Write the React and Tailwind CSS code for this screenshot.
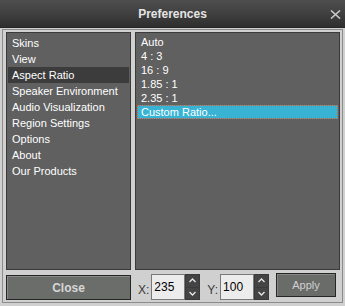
import { useState } from "react";

const pages = [
  "Skins",
  "View",
  "Aspect Ratio",
  "Speaker Environment",
  "Audio Visualization",
  "Region Settings",
  "Options",
  "About",
  "Our Products",
];

const ratios = ["Auto", "4 : 3", "16 : 9", "1.85 : 1", "2.35 : 1", "Custom Ratio..."];

function Spinner() {
  return (
    <div className="w-[15px] h-[26px] bg-[#3a3a3a] flex flex-col gap-[1px] p-[1px]">
      <div className="flex-1 bg-[#444] flex items-center justify-center">
        <svg width="7" height="5" viewBox="0 0 7 5">
          <path d="M0.5 4 L3.5 1 L6.5 4" stroke="#e8e8e8" strokeWidth="1.3" fill="none" />
        </svg>
      </div>
      <div className="flex-1 bg-[#444] flex items-center justify-center">
        <svg width="7" height="5" viewBox="0 0 7 5">
          <path d="M0.5 1 L3.5 4 L6.5 1" stroke="#e8e8e8" strokeWidth="1.3" fill="none" />
        </svg>
      </div>
    </div>
  );
}

export default function App() {
  const [page, setPage] = useState("Aspect Ratio");
  const [ratio, setRatio] = useState("Custom Ratio...");
  const [x, setX] = useState("235");
  const [y, setY] = useState("100");

  return (
    <div className="w-[345px] h-[306px] bg-[#d0d0d0] flex flex-col font-['Liberation_Sans',Arial,sans-serif] overflow-hidden">
      {/* title bar */}
      <div className="relative h-[28px] shrink-0 bg-gradient-to-b from-[#4e4e4e] via-[#404040] to-[#2e2e2e] border-b border-[#262626] flex items-center justify-center">
        <span className="text-[12px] font-bold text-[#e4e4e4]">Preferences</span>
        <svg className="absolute right-[4px] top-[10px]" width="11" height="9" viewBox="0 0 11 9">
          <path d="M1 0.5 L10 8.5 M10 0.5 L1 8.5" stroke="#c8c8c8" strokeWidth="1.6" />
        </svg>
      </div>

      <div className="flex-1 mt-[1px] mx-[2px] mb-[3px] border border-[#8c8c8c] flex flex-col pl-[3px] pr-[2px] pt-[2px] pb-[2px]">
        <div className="flex gap-[4px] h-[238px]">
          <div className="w-[125px] bg-[#606060] border border-[#3a3a3a] pt-[2px] pl-[1px] pr-[1px]">
            {pages.map((p) => (
              <div
                key={p}
                onClick={() => setPage(p)}
                className={`h-[16px] pl-[4px] flex items-center text-[11px] text-white whitespace-nowrap ${
                  page === p ? "bg-[#3c3c3c]" : ""
                }`}
              >
                {p}
              </div>
            ))}
          </div>

          <div className="flex-1 bg-[#606060] border border-[#3a3a3a] pt-[2px] px-[1px]">
            {ratios.map((r) => (
              <div
                key={r}
                onClick={() => setRatio(r)}
                className={`h-[14px] pl-[3px] flex items-center text-[11px] text-white whitespace-nowrap border ${
                  ratio === r ? "bg-[#38b3d3] border-dotted border-[#e0562a]" : "border-transparent"
                }`}
              >
                {r}
              </div>
            ))}
          </div>
        </div>

        <div className="flex items-start mt-[3px]">
          <button className="w-[125px] h-[25px] mt-[2px] bg-[#6b6d6b] border border-[#262626] shadow-[inset_1px_1px_0_#8a8a8a] text-[12px] font-bold text-[#d6d6d6]">
            Close
          </button>

          <span className="ml-[7px] mt-[8px] text-[12px] text-[#3a3a3a]">X:</span>
          <input
            value={x}
            onChange={(e) => setX(e.target.value)}
            className="ml-[2px] mt-[1px] w-[34px] h-[26px] bg-[#ececec] border border-[#7a7a7a] pl-[2px] text-[12px] text-black outline-none"
          />
          <div className="mt-[1px]">
            <Spinner />
          </div>

          <span className="ml-[7px] mt-[8px] text-[12px] text-[#3a3a3a]">Y:</span>
          <input
            value={y}
            onChange={(e) => setY(e.target.value)}
            className="ml-[2px] mt-[1px] w-[34px] h-[26px] bg-[#ececec] border border-[#7a7a7a] pl-[2px] text-[12px] text-black outline-none"
          />
          <div className="mt-[1px]">
            <Spinner />
          </div>

          <button className="ml-[7px] w-[60px] h-[24px] bg-[#6a6c6a] border border-[#262626] shadow-[inset_1px_1px_0_#858585] text-[11px] text-[#d0d0d0]">
            Apply
          </button>
        </div>
      </div>
    </div>
  );
}
